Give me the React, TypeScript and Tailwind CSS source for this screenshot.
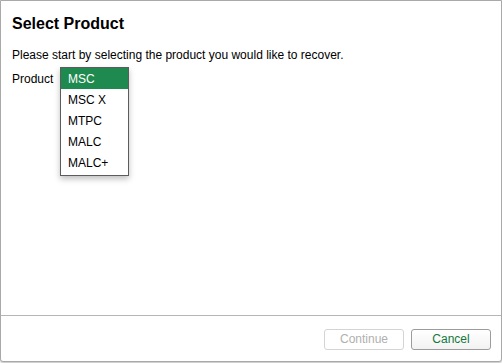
import React from 'react';

const products = ['MSC', 'MSC X', 'MTPC', 'MALC', 'MALC+'];

export default function App() {
  const selected = 'MSC';
  return (
    <div className="w-[502px] h-[363px] bg-white" style={{ fontFamily: '"Liberation Sans", Arial, sans-serif' }}>
      <div className="w-[502px] h-[362px] border border-[#a9a9a9] rounded-b-[3px] flex flex-col bg-white shadow-[0_1px_2px_rgba(0,0,0,0.25)]">
        <div className="flex-1 px-[11px] pt-[13px]">
          <h1 className="text-[16px] font-bold text-black leading-[20px]">Select Product</h1>
          <p className="mt-[14px] text-[12px] text-black leading-[15px]">
            Please start by selecting the product you would like to recover.
          </p>
          <div className="flex items-start mt-[4px]">
            <span className="text-[12px] text-black leading-[15px] mt-[5px] w-[48px]">Product</span>
            <div className="w-[69px] border border-[#5c5c5c] bg-white shadow-[0_3px_6px_rgba(0,0,0,0.25)] pb-[2px]">
              {products.map((p) => (
                <div
                  key={p}
                  className={`h-[21px] flex items-center pl-[7px] text-[12px] ${
                    p === selected ? 'bg-[#1f8a4f] text-white' : 'text-black'
                  }`}
                >
                  {p}
                </div>
              ))}
            </div>
          </div>
        </div>
        <div className="h-[46px] border-t border-[#b5b5b5] flex items-center justify-end gap-[7px] pr-[10px] pt-[1px]">
          <button className="w-[80px] h-[21px] rounded-[3px] border border-[#d4d4d4] bg-white text-[12px] text-[#b0b0b0]">
            Continue
          </button>
          <button className="w-[80px] h-[21px] rounded-[3px] border border-[#9c9c9c] bg-gradient-to-b from-white to-[#f2f2f2] text-[12px] text-[#13783c]">
            Cancel
          </button>
        </div>
      </div>
    </div>
  );
}
